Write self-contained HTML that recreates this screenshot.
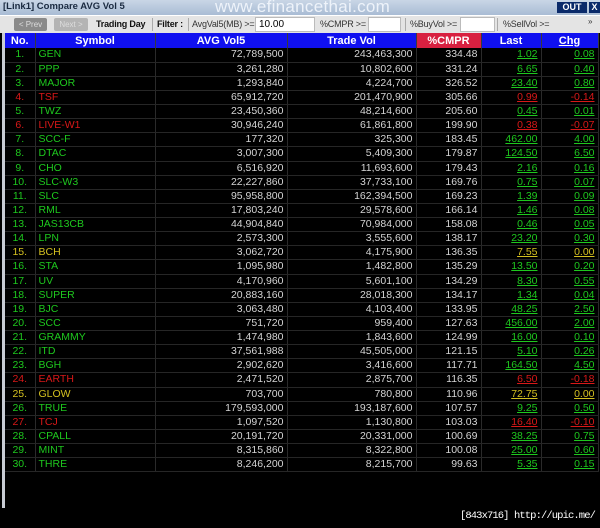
<!DOCTYPE html>
<html><head><meta charset="utf-8"><style>
*{margin:0;padding:0;box-sizing:border-box}
body{width:600px;height:528px;background:#000;position:relative;overflow:hidden;font-family:"Liberation Sans",Arial,sans-serif;font-size:11px}
.title{position:absolute;left:0;top:0;width:600px;height:15px;background:linear-gradient(#c9d6e6,#a9bcd4);}
.title b{position:absolute;left:3px;top:1px;font-size:9.5px;color:#1a2a40}
.wm{position:absolute;left:215px;top:-3px;font-size:17px;color:#eef3fa;letter-spacing:0.3px}
.out{position:absolute;left:557px;top:2px;width:30px;height:11px;background:#0a2a6a;color:#fff;font-size:9px;font-weight:bold;text-align:center;line-height:11px}
.x{position:absolute;left:589px;top:2px;width:11px;height:11px;background:#0a2a6a;color:#fff;font-size:9px;font-weight:bold;text-align:center;line-height:11px}
.tb{position:absolute;left:0;top:15px;width:600px;height:18px;background:#e4e4e4;border-top:1px solid #fff}
.tb span{position:absolute;top:3px;font-size:9px;color:#333;white-space:nowrap;letter-spacing:-0.2px}
.btn{position:absolute;top:2px;height:13px;border-radius:2px;color:#ddd;font-size:8px;text-align:center;line-height:13px}
.inp{position:absolute;top:1px;height:15px;background:#fff;border:1px solid #bbb;font-size:10px;padding-left:3px;line-height:13px}
.sep{position:absolute;top:2px;width:1px;height:13px;background:#aaa}
.lbar{position:absolute;left:2px;top:33px;width:3px;height:475px;background:#c8ccd4}
table{position:absolute;left:5px;top:33px;border-collapse:collapse;table-layout:fixed;width:593px}
th{background:#1010f0;color:#fff;font-weight:bold;font-size:11px;height:15px;text-align:center;border-right:1px solid #3a3a3a}
th.r{background:#d82040}
td{height:14.13px;line-height:13px;border-right:1px solid #2a2a2a;border-bottom:1px solid #262626;color:#d4d4d4;text-align:right;padding-right:3px;font-size:10.5px;white-space:nowrap}
td.n{text-align:center;padding:0;color:#1ec81e}
td.s{text-align:left;padding-left:3px;color:#1ec81e}
td.l,td.c{text-decoration:underline;color:#1ec81e}
tr.R td.n,tr.R td.s,tr.R td.l,tr.R td.c{color:#d81818}
tr.Y td.n,tr.Y td.s,tr.Y td.l,tr.Y td.c{color:#d4c020}
.foot{position:absolute;right:5px;top:510px;color:#fff;font-size:10.5px;font-family:"Liberation Mono",monospace;letter-spacing:-0.9px;white-space:nowrap}
</style></head><body>
<div class="title"><b>[Link1] Compare AVG Vol 5</b><div class="wm">www.efinancethai.com</div><div class="out">OUT</div><div class="x">X</div></div>
<div class="tb">
<div class="btn" style="left:14px;width:33px;background:#8a8a8a">&lt; Prev</div>
<div class="btn" style="left:54px;width:34px;background:#b4b4b4">Next &gt;</div>
<span style="left:96px;font-weight:bold;color:#111">Trading Day</span>
<div class="sep" style="left:152px"></div>
<span style="left:157px;font-weight:bold;color:#111">Filter :</span>
<div class="sep" style="left:188px"></div>
<span style="left:192px">AvgVal5(MB) &gt;=</span>
<div class="inp" style="left:255px;width:60px">10.00</div>
<span style="left:320px">%CMPR &gt;=</span>
<div class="inp" style="left:368px;width:33px"></div>
<div class="sep" style="left:405px"></div>
<span style="left:410px">%BuyVol &gt;=</span>
<div class="inp" style="left:460px;width:35px"></div>
<div class="sep" style="left:497px"></div>
<span style="left:503px">%SellVol &gt;=</span>
<span style="left:588px;font-size:8px;top:1px">»</span>
</div>
<div class="lbar"></div>
<table>
<colgroup><col style="width:30px"><col style="width:120px"><col style="width:132px"><col style="width:129px"><col style="width:65px"><col style="width:60px"><col style="width:57px"></colgroup>
<tr><th>No.</th><th>Symbol</th><th>AVG Vol5</th><th>Trade Vol</th><th class="r">%CMPR</th><th>Last</th><th style="text-decoration:underline">Chg</th></tr>
<tr><td class="n">1.</td><td class="s">GEN</td><td>72,789,500</td><td>243,463,300</td><td>334.48</td><td class="l">1.02</td><td class="c">0.08</td></tr>
<tr><td class="n">2.</td><td class="s">PPP</td><td>3,261,280</td><td>10,802,600</td><td>331.24</td><td class="l">6.65</td><td class="c">0.40</td></tr>
<tr><td class="n">3.</td><td class="s">MAJOR</td><td>1,293,840</td><td>4,224,700</td><td>326.52</td><td class="l">23.40</td><td class="c">0.80</td></tr>
<tr class="R"><td class="n">4.</td><td class="s">TSF</td><td>65,912,720</td><td>201,470,900</td><td>305.66</td><td class="l">0.99</td><td class="c">-0.14</td></tr>
<tr><td class="n">5.</td><td class="s">TWZ</td><td>23,450,360</td><td>48,214,600</td><td>205.60</td><td class="l">0.45</td><td class="c">0.01</td></tr>
<tr class="R"><td class="n">6.</td><td class="s">LIVE-W1</td><td>30,946,240</td><td>61,861,800</td><td>199.90</td><td class="l">0.38</td><td class="c">-0.07</td></tr>
<tr><td class="n">7.</td><td class="s">SCC-F</td><td>177,320</td><td>325,300</td><td>183.45</td><td class="l">462.00</td><td class="c">4.00</td></tr>
<tr><td class="n">8.</td><td class="s">DTAC</td><td>3,007,300</td><td>5,409,300</td><td>179.87</td><td class="l">124.50</td><td class="c">6.50</td></tr>
<tr><td class="n">9.</td><td class="s">CHO</td><td>6,516,920</td><td>11,693,600</td><td>179.43</td><td class="l">2.16</td><td class="c">0.16</td></tr>
<tr><td class="n">10.</td><td class="s">SLC-W3</td><td>22,227,860</td><td>37,733,100</td><td>169.76</td><td class="l">0.75</td><td class="c">0.07</td></tr>
<tr><td class="n">11.</td><td class="s">SLC</td><td>95,958,800</td><td>162,394,500</td><td>169.23</td><td class="l">1.39</td><td class="c">0.09</td></tr>
<tr><td class="n">12.</td><td class="s">RML</td><td>17,803,240</td><td>29,578,600</td><td>166.14</td><td class="l">1.46</td><td class="c">0.08</td></tr>
<tr><td class="n">13.</td><td class="s">JAS13CB</td><td>44,904,840</td><td>70,984,000</td><td>158.08</td><td class="l">0.46</td><td class="c">0.05</td></tr>
<tr><td class="n">14.</td><td class="s">LPN</td><td>2,573,300</td><td>3,555,600</td><td>138.17</td><td class="l">23.20</td><td class="c">0.30</td></tr>
<tr class="Y"><td class="n">15.</td><td class="s">BCH</td><td>3,062,720</td><td>4,175,900</td><td>136.35</td><td class="l">7.55</td><td class="c">0.00</td></tr>
<tr><td class="n">16.</td><td class="s">STA</td><td>1,095,980</td><td>1,482,800</td><td>135.29</td><td class="l">13.50</td><td class="c">0.20</td></tr>
<tr><td class="n">17.</td><td class="s">UV</td><td>4,170,960</td><td>5,601,100</td><td>134.29</td><td class="l">8.30</td><td class="c">0.55</td></tr>
<tr><td class="n">18.</td><td class="s">SUPER</td><td>20,883,160</td><td>28,018,300</td><td>134.17</td><td class="l">1.34</td><td class="c">0.04</td></tr>
<tr><td class="n">19.</td><td class="s">BJC</td><td>3,063,480</td><td>4,103,400</td><td>133.95</td><td class="l">48.25</td><td class="c">2.50</td></tr>
<tr><td class="n">20.</td><td class="s">SCC</td><td>751,720</td><td>959,400</td><td>127.63</td><td class="l">456.00</td><td class="c">2.00</td></tr>
<tr><td class="n">21.</td><td class="s">GRAMMY</td><td>1,474,980</td><td>1,843,600</td><td>124.99</td><td class="l">16.00</td><td class="c">0.10</td></tr>
<tr><td class="n">22.</td><td class="s">ITD</td><td>37,561,988</td><td>45,505,000</td><td>121.15</td><td class="l">5.10</td><td class="c">0.26</td></tr>
<tr><td class="n">23.</td><td class="s">BGH</td><td>2,902,620</td><td>3,416,600</td><td>117.71</td><td class="l">164.50</td><td class="c">4.50</td></tr>
<tr class="R"><td class="n">24.</td><td class="s">EARTH</td><td>2,471,520</td><td>2,875,700</td><td>116.35</td><td class="l">6.50</td><td class="c">-0.18</td></tr>
<tr class="Y"><td class="n">25.</td><td class="s">GLOW</td><td>703,700</td><td>780,800</td><td>110.96</td><td class="l">72.75</td><td class="c">0.00</td></tr>
<tr><td class="n">26.</td><td class="s">TRUE</td><td>179,593,000</td><td>193,187,600</td><td>107.57</td><td class="l">9.25</td><td class="c">0.50</td></tr>
<tr class="R"><td class="n">27.</td><td class="s">TCJ</td><td>1,097,520</td><td>1,130,800</td><td>103.03</td><td class="l">16.40</td><td class="c">-0.10</td></tr>
<tr><td class="n">28.</td><td class="s">CPALL</td><td>20,191,720</td><td>20,331,000</td><td>100.69</td><td class="l">38.25</td><td class="c">0.75</td></tr>
<tr><td class="n">29.</td><td class="s">MINT</td><td>8,315,860</td><td>8,322,800</td><td>100.08</td><td class="l">25.00</td><td class="c">0.60</td></tr>
<tr><td class="n">30.</td><td class="s">THRE</td><td>8,246,200</td><td>8,215,700</td><td>99.63</td><td class="l">5.35</td><td class="c">0.15</td></tr>
</table>
<div class="foot">[843x716] http://upic.me/</div>
</body></html>
